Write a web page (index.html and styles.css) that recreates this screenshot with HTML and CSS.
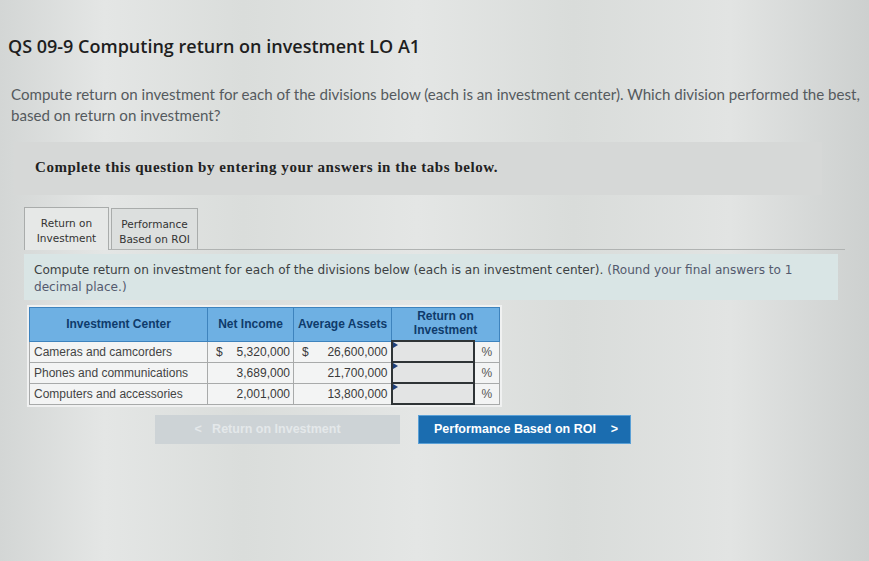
FILE: index.html
```html
<!DOCTYPE html>
<html>
<head>
<meta charset="utf-8">
<link rel="stylesheet" href="styles.css">
</head>
<body>
<div class="page">
  <h1 class="title">QS 09-9 Computing return on investment LO A1</h1>
  <p class="intro">Compute return on investment for each of the divisions below (each is an investment center). Which division performed the best, based on return on investment?</p>
  <div class="notice">Complete this question by entering your answers in the tabs below.</div>
  <div class="tabs">
    <div class="tab active">Return on<br>Investment</div>
    <div class="tab">Performance<br>Based on ROI</div>
  </div>
  <div class="instr">Compute return on investment for each of the divisions below (each is an investment center). <span class="round">(Round your final answers to 1 decimal place.)</span></div>
  <table class="grid">
    <colgroup>
      <col class="c1"><col class="c2"><col class="c3"><col class="c4"><col class="c5">
    </colgroup>
    <thead>
      <tr>
        <th>Investment Center</th>
        <th>Net Income</th>
        <th>Average Assets</th>
        <th colspan="2" class="roi">Return on<br>Investment</th>
      </tr>
    </thead>
    <tbody>
      <tr>
        <td class="name">Cameras and camcorders</td>
        <td class="num"><span class="cur">$</span>5,320,000</td>
        <td class="num"><span class="cur">$</span>26,600,000</td>
        <td class="inp"><div class="box"></div></td>
        <td class="pct">%</td>
      </tr>
      <tr>
        <td class="name">Phones and communications</td>
        <td class="num">3,689,000</td>
        <td class="num">21,700,000</td>
        <td class="inp"><div class="box"></div></td>
        <td class="pct">%</td>
      </tr>
      <tr>
        <td class="name">Computers and accessories</td>
        <td class="num">2,001,000</td>
        <td class="num">13,800,000</td>
        <td class="inp"><div class="box"></div></td>
        <td class="pct">%</td>
      </tr>
    </tbody>
  </table>
  <div class="nav">
    <div class="btn prev">&lt;&nbsp;&nbsp;&nbsp;Return on Investment</div>
    <div class="btn next">Performance Based on ROI<span class="chev">&gt;</span></div>
  </div>
</div>
</body>
</html>
```
FILE: styles.css
```css
html, body {
  margin: 0;
  padding: 0;
}
body {
  width: 869px;
  height: 561px;
  overflow: hidden;
  background: linear-gradient(90deg, #d3d6d5 0%, #e4e6e5 12%, #dadddb 28%, #e4e6e5 48%, #d9dcda 66%, #e2e4e3 84%, #cdd0cf 100%);
}
.page {
  padding: 34px 0 0 8px;
}
.title {
  margin: 0;
  font-family: "Open Sans", sans-serif;
  font-weight: 600;
  font-size: 18px;
  line-height: 24px;
  color: #1e1e1e;
}
.intro {
  margin: 26px 0 0 3px;
  width: 852px;
  font-family: "Lato", sans-serif;
  font-size: 15.1px;
  line-height: 21px;
  color: #555a5e;
}
.notice {
  margin: 16px 0 0 6px;
  width: 808px;
  height: 53px;
  box-sizing: border-box;
  padding: 17px 0 0 21px;
  background: #d6d8d7;
  font-family: "Liberation Serif", serif;
  font-weight: bold;
  font-size: 15px;
  color: #222;
  letter-spacing: 0.55px;
}
.tabs {
  margin: 12px 0 0 16px;
  width: 821px;
  display: flex;
  align-items: flex-end;
  border-bottom: 1px solid #b0b3b2;
  height: 42px;
}
.tab {
  box-sizing: border-box;
  height: 42px;
  padding: 8px 0 0 0;
  text-align: center;
  font-family: "DejaVu Sans", sans-serif;
  font-size: 10.5px;
  line-height: 15px;
  color: #333;
  border: 1px solid #a9acab;
  border-bottom: none;
  background: #e2e4e3;
}
.tab.active {
  width: 85px;
  height: 43px;
  margin-bottom: -1px;
  background: #e6e8e7;
}
.tab + .tab {
  width: 87px;
  margin-left: 2px;
  height: 41px;
  background: #dcdfde;
}
.instr {
  margin: 4px 0 0 16px;
  width: 814px;
  height: 46px;
  box-sizing: border-box;
  padding: 8px 30px 0 10px;
  background: #d9e5e5;
  font-family: "DejaVu Sans", sans-serif;
  font-size: 12.1px;
  line-height: 17px;
  color: #3c4143;
}
.round {
  color: #545a6e;
}
.grid {
  margin: 7px 0 0 21px;
  border-collapse: collapse;
  table-layout: fixed;
  width: 470px;
  font-family: "Liberation Sans", Arial, sans-serif;
  font-size: 12px;
  color: #3a3a3a;
  background: #f3f4f4;
  outline: 2px solid #f0f1f1;
}
.c1 { width: 178px; }
.c2 { width: 86px; }
.c3 { width: 98px; }
.c4 { width: 82px; }
.c5 { width: 26px; }
.grid th {
  height: 31px;
  padding: 0;
  background: #6eb0e3;
  border: 1px solid #3e83bd;
  font-weight: bold;
  color: #0f3b6b;
  font-size: 12px;
  line-height: 14px;
}
.grid th.roi {
  vertical-align: top;
  padding-top: 1px;
}
.grid td {
  height: 19px;
  padding: 0;
  border: 1px solid #a8aaaa;
}
.grid td.name {
  padding-left: 4px;
  color: #444;
}
.grid td.num {
  text-align: right;
  padding-right: 3px;
}
.cur {
  float: left;
  padding-left: 8px;
}
.grid td.inp {
  padding: 0;
  border: 2px solid #2f3436;
  background: #e3e4e4;
  position: relative;
}
.box {
  height: 17px;
}
.grid td.inp::before {
  content: "";
  position: absolute;
  left: 0;
  top: 0;
  border-left: 5px solid #1d3f7a;
  border-top: 3px solid transparent;
  border-bottom: 3px solid transparent;
}
.grid td.pct {
  text-align: center;
  color: #555;
}
.nav {
  margin: 10px 0 0 147px;
  display: flex;
  gap: 18px;
}
.btn {
  box-sizing: border-box;
  height: 29px;
  font-family: "Liberation Sans", Arial, sans-serif;
  font-size: 12.5px;
  font-weight: bold;
  line-height: 29px;
}
.prev {
  width: 245px;
  background: #cdd3d6;
  color: #e4e8ea;
  text-align: center;
  padding-right: 20px;
}
.next {
  width: 213px;
  background: #1b6db0;
  border: 1px solid #5aa0d6;
  line-height: 27px;
  color: #ffffff;
  padding-left: 15px;
}
.chev {
  margin-left: 15px;
}
```
